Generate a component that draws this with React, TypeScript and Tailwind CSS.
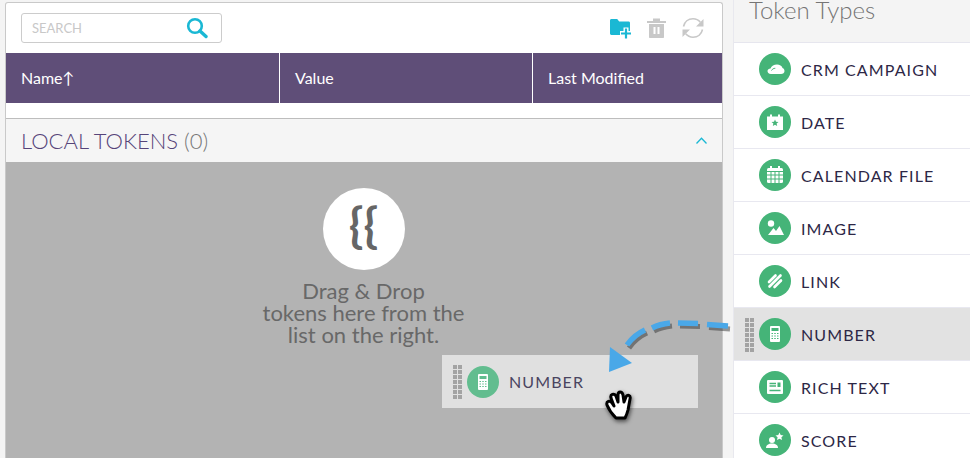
import React from 'react'

const CloudIcon = () => (
  <svg viewBox="0 0 32 32" className="w-8 h-8">
    <path d="M12 21C9.500 21 8.500 19.500 8.500 18C8.500 16.500 10 15.500 11.500 15.500C12.500 13 15 11.500 18 11.500C20.500 11.500 23 13 23.500 15C25 15.500 25.500 17 25.500 18C25.500 20 24 21 22 21Z" fill="#fff" />
    <path d="M12.500 17.500c.8-1.500 2.200-2.200 3.800-2.200" stroke="#45b478" strokeWidth="1" fill="none" />
  </svg>
)

const DateIcon = () => (
  <svg viewBox="0 0 32 32" className="w-8 h-8">
    <path d="M8 10.500h3V8.500h2v2h6V8.500h2v2h3V24H8z" fill="#fff" />
    <path d="M16 13.500l1 2.300 2.500.2-1.900 1.600.6 2.400-2.200-1.300-2.200 1.300.6-2.400-1.900-1.600 2.500-.2z" fill="#45b478" />
  </svg>
)

const CalendarIcon = () => (
  <svg viewBox="0 0 32 32" className="w-8 h-8">
    <rect x="8" y="9" width="16" height="15" rx="1.500" fill="#fff" />
    <rect x="11" y="7" width="2" height="4" fill="#fff" />
    <rect x="19" y="7" width="2" height="4" fill="#fff" />
    <path d="M8 12.500h16M8 16h16M8 20h16M12 12.500V24M16 12.500V24M20 12.500V24" stroke="#45b478" strokeWidth="1" />
  </svg>
)

const ImageIcon = () => (
  <svg viewBox="0 0 32 32" className="w-8 h-8">
    <circle cx="12" cy="11.500" r="3.200" fill="#fff" />
    <path d="M9 23l5.500-7 2.500 3 3.500-5 4.500 9z" fill="#fff" />
  </svg>
)

const LinkIcon = () => (
  <svg viewBox="0 0 32 32" className="w-8 h-8">
    <g stroke="#fff" strokeWidth="2.600" strokeLinecap="round" fill="none">
      <path d="M10 17l6.500-6.500" />
      <path d="M10.500 21.500l11-11" />
      <path d="M15.500 22l6.500-6.500" />
    </g>
  </svg>
)

const NumberIcon = () => (
  <svg viewBox="0 0 32 32" className="w-8 h-8">
    <rect x="11" y="8" width="10" height="16" rx="1" fill="#fff" />
    <rect x="12.500" y="10" width="7" height="3" fill="#45b478" />
    <path d="M12.500 15.500h7M12.500 18h7M12.500 20.500h7" stroke="#45b478" strokeWidth="1" strokeDasharray="1.500 1.250" />
  </svg>
)

const RichTextIcon = () => (
  <svg viewBox="0 0 32 32" className="w-8 h-8">
    <rect x="8" y="9" width="16" height="14" rx="1" fill="#fff" />
    <path d="M10.500 12.500h6.500M10.500 15h6.500M10.500 19.500h11" stroke="#45b478" strokeWidth="1.300" />
    <rect x="18.500" y="11.500" width="3" height="4.500" fill="#45b478" />
  </svg>
)

const ScoreIcon = () => (
  <svg viewBox="0 0 32 32" className="w-8 h-8">
    <circle cx="13" cy="16" r="3" fill="#fff" />
    <path d="M7 24c0-3 2.500-4.500 6-4.500s6 1.500 6 4.500z" fill="#fff" />
    <path d="M20.500 8.500l1.200 2.600 2.800.3-2.100 1.900.6 2.800-2.500-1.400-2.500 1.400.6-2.800-2.100-1.900 2.800-.3z" fill="#fff" />
  </svg>
)

const GripDots = () => (
  <div className="grid grid-cols-2 w-[9px] gap-[1px]">
    {Array.from({ length: 14 }).map((_, i) => (
      <span key={i} className="block w-[4px] h-[4px] bg-[#a3a3a3]"></span>
    ))}
  </div>
)

const tokens = [
  { name: 'CRM CAMPAIGN', icon: <CloudIcon /> },
  { name: 'DATE', icon: <DateIcon /> },
  { name: 'CALENDAR FILE', icon: <CalendarIcon /> },
  { name: 'IMAGE', icon: <ImageIcon /> },
  { name: 'LINK', icon: <LinkIcon /> },
  { name: 'NUMBER', icon: <NumberIcon />, active: true },
  { name: 'RICH TEXT', icon: <RichTextIcon /> },
  { name: 'SCORE', icon: <ScoreIcon /> },
]

// four separate dashes, right to left
const arrowPath = 'M128 8L107 6.500M98 5.500L78 5M70 5Q60 6 52 10M45 12Q34 17 27 27'

const App = () => {
  return (
    <div className="relative w-[970px] h-[458px] overflow-hidden bg-[#f4f4f4] flex font-['Lato','Liberation_Sans',sans-serif]">
      {/* left panel */}
      <div className="ml-[5px] mt-[2px] w-[718px] h-[456px] flex flex-col border border-b-0 border-[#c9c9c9] rounded-t-[3px] bg-white">
        <div className="h-[50px] shrink-0 flex items-center pl-[15px] pr-[17px]">
          <div className="w-[201px] h-[30px] flex items-center justify-between border border-[#cccccc] rounded-[3px] pl-[10px] pr-[13px]">
            <span className="text-[13px] text-[#c8c8c8] pt-[2px]">SEARCH</span>
            <svg viewBox="0 0 22 22" className="w-[22px] h-[22px]">
              <circle cx="9" cy="9" r="6.800" fill="none" stroke="#1ab8d4" strokeWidth="2.600" />
              <path d="M14 14l6 5.500" stroke="#1ab8d4" strokeWidth="3.400" strokeLinecap="round" />
            </svg>
          </div>
          <div className="ml-auto flex items-center">
            <svg viewBox="0 0 22 20" className="w-[22px] h-[20px] mt-[1px] ml-[1px]">
              <path d="M0 1.500C0 .7.600 0 1.400 0h5.800l2 2.600h9.400c.8 0 1.400.6 1.400 1.400v10.500c0 .8-.6 1.400-1.400 1.400H1.400C.600 15.900 0 15.300 0 14.500z" fill="#1ab8d4" />
              <path d="M16 8.500v11.500M10 14.500h11.500" stroke="#fff" strokeWidth="5" />
              <path d="M16 9.500v10M11 14.500h10" stroke="#1ab8d4" strokeWidth="2.200" />
            </svg>
            <svg viewBox="0 0 19 20" className="ml-[15px] w-[19px] h-[20px]">
              <path d="M0 3h19v2H0zM6 0.500h7V3H6z" fill="#c8c8c8" />
              <path d="M2 6h15v13c0 .6-.4 1-1 1H3c-.6 0-1-.4-1-1z" fill="#c8c8c8" />
              <path d="M7.500 9v7M11.500 9v7" stroke="#fff" strokeWidth="2" />
            </svg>
            <svg viewBox="0 0 24 22" className="ml-[15px] w-[24px] h-[22px]">
              <path d="M2.500 9.500C3.500 5 7.200 1.800 12 1.800c3 0 5.600 1.300 7.300 3.400" fill="none" stroke="#c8c8c8" strokeWidth="1.600" />
              <path d="M21.500 12.500c-1 4.500-4.700 7.700-9.500 7.700-3 0-5.600-1.300-7.300-3.400" fill="none" stroke="#c8c8c8" strokeWidth="1.600" />
              <path d="M22.500 2v7.500h-7.500z" fill="#c8c8c8" />
              <path d="M1.500 20v-7.500h7.500z" fill="#c8c8c8" />
            </svg>
          </div>
        </div>
        <div className="h-[50px] shrink-0 flex bg-[#5f4e78] text-white text-[16px]">
          <div className="w-[274px] flex items-center pl-[15px] border-r border-white">Name↑</div>
          <div className="w-[253px] flex items-center pl-[15px] border-r border-white">Value</div>
          <div className="flex-1 flex items-center pl-[15px]">Last Modified</div>
        </div>
        <div className="h-[15px] shrink-0 bg-white"></div>
        <div className="h-[44px] shrink-0 flex items-center justify-between bg-[#f5f5f5] border-t border-[#bdbdbd] pl-[15px] pr-[15px]">
          <span className="text-[22px] font-light text-[#564479]">
            LOCAL TOKENS <span className="text-[#777777]">(0)</span>
          </span>
          <svg viewBox="0 0 11 7" className="w-[11px] h-[7px]">
            <path d="M.5 6.500L5.500 1.200l5 5.300" fill="none" stroke="#1ab8d4" strokeWidth="1.300" />
          </svg>
        </div>
        <div className="flex-1 flex flex-col items-center bg-[#b3b3b3] pt-[26px] pr-[1px]">
          <div className="w-[82px] h-[82px] rounded-full bg-white flex items-center justify-center">
            <span className="text-[48px] leading-none font-bold text-[#666666] pb-[8px]">{'{{'}</span>
          </div>
          <p className="mt-[10px] text-center text-[22px] leading-[22px] text-[#686868]">
            <span className="block">Drag &amp; Drop</span>
            <span className="block">tokens here from the</span>
            <span className="block">list on the right.</span>
          </p>
        </div>
      </div>

      {/* token list */}
      <div className="ml-[10px] w-[237px] h-[458px] flex flex-col border-l border-[#e8e8ee]">
        <div className="h-[43px] shrink-0 pl-[15px] bg-[#f4f4f4] border-b border-[#e6e6ee]">
          <span className="block text-[24px] leading-[20px] font-light text-[#757575]">Token Types</span>
        </div>
        {tokens.map((t) => (
          <div
            key={t.name}
            className={`h-[53px] shrink-0 relative flex items-center pl-[25px] gap-[10px] border-b border-[#e8e8f0] ${t.active ? 'bg-[#e2e2e2]' : 'bg-white'}`}
          >
            {t.active && (
              <div className="absolute left-[11px] top-[10px]">
                <GripDots />
              </div>
            )}
            <span className="w-8 h-8 rounded-full bg-[#45b478] flex items-center justify-center shrink-0">{t.icon}</span>
            <span className="text-[16px] tracking-[1.100px] text-[#2d2746] pt-[2px]">{t.name}</span>
          </div>
        ))}
      </div>

      {/* dragged token */}
      <div className="absolute left-[442px] top-[355px] w-[256px] h-[53px] flex items-center pl-[25px] gap-[10px] bg-[#e0e0e0]">
        <div className="absolute left-[11px] top-[10px]">
          <GripDots />
        </div>
        <span className="w-8 h-8 rounded-full bg-[#62bd8f] flex items-center justify-center shrink-0">
          <svg viewBox="0 0 32 32" className="w-8 h-8">
            <rect x="11" y="8" width="10" height="16" rx="1" fill="#fff" />
            <rect x="12.500" y="10" width="7" height="3" fill="#62bd8f" />
            <path d="M12.500 15.500h7M12.500 18h7M12.500 20.500h7" stroke="#62bd8f" strokeWidth="1" strokeDasharray="1.500 1.250" />
          </svg>
        </span>
        <span className="text-[16px] tracking-[1.100px] text-[#4a4560]">NUMBER</span>
      </div>

      {/* arrow */}
      <svg viewBox="0 0 140 60" className="absolute left-[600px] top-[318px] w-[140px] h-[60px]">
        <path d={arrowPath} fill="none" stroke="#333" strokeOpacity=".5" strokeWidth="5" transform="translate(2 3)" />
        <path d={arrowPath} fill="none" stroke="#4aa8e8" strokeWidth="5.500" />
        <path d="M10 29L32 45L9 54Z" fill="#4aa8e8" />
      </svg>

      {/* hand cursor */}
      <svg viewBox="0 0 34 36" className="absolute left-[602px] top-[390px] w-[34px] h-[36px] drop-shadow-[1px_2px_2px_rgba(0,0,0,0.6)]">
        <path d="M14 28C11 25 7 20 5 15C4 11 8 10 10 13L12 16L9 8C8 4 12 3 14 6L16 12L16 5C16 1 20 1 21 5L22 12L24 7C25 4 29 5 28 9L26 20C25 24 24 26 23 28Z" fill="#fff" stroke="#000" strokeWidth="3" strokeLinejoin="round" />
      </svg>
    </div>
  )
}

export default App
